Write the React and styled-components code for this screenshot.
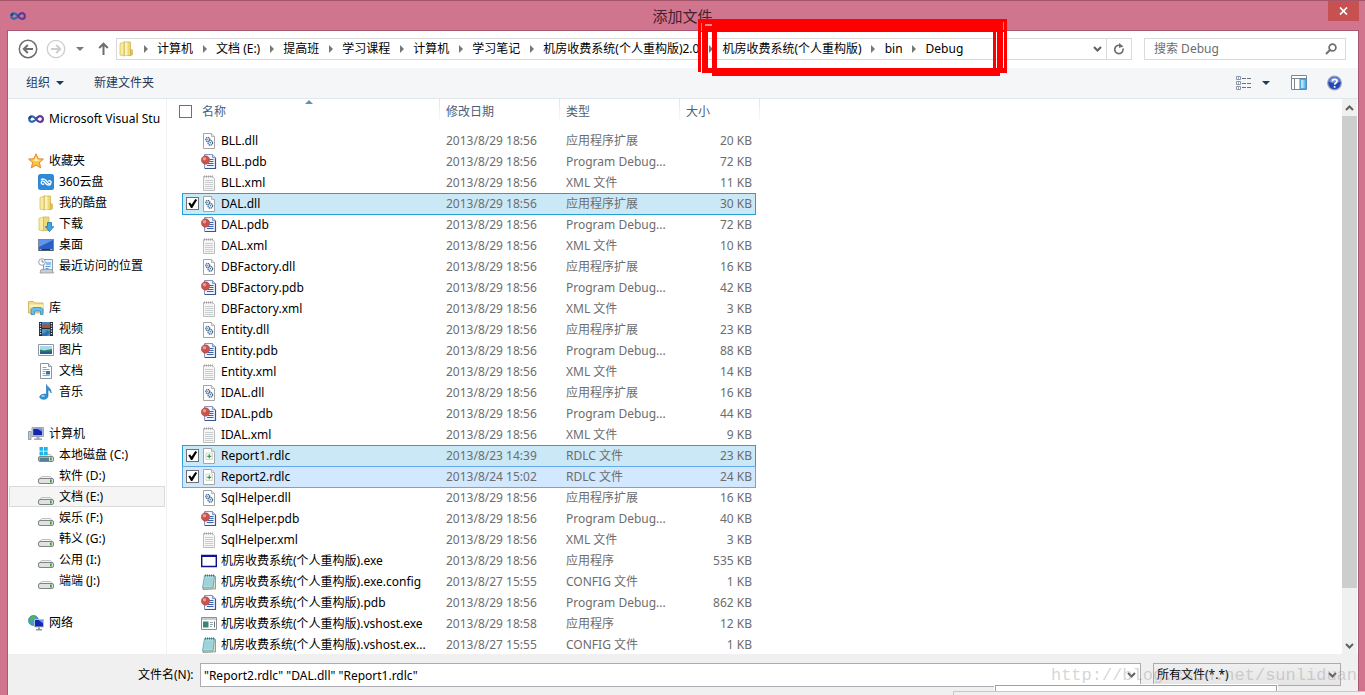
import React, { useState } from 'react'
import styled, { createGlobalStyle, css } from 'styled-components'

const GlobalStyle = createGlobalStyle`
  * {
    box-sizing: border-box;
  }
  body {
    margin: 0;
    overflow: hidden;
  }
  body, button, input, select {
    font-family: 'Noto Sans', 'Noto Sans CJK SC', sans-serif;
    font-size: 12px;
    line-height: 20px;
  }
  button {
    border: 0;
    padding: 0;
    background: none;
    color: inherit;
  }
  svg {
    display: block;
    flex: none;
  }
`

const Window = styled.div`
  position: relative;
  display: flex;
  flex-direction: column;
  height: 100vh;
  overflow: hidden;
  padding: 0 6px 0 7px;
  background: #d1758f;
  border-top: 1px solid #a5566c;
  color: #000;
`

const TitleBar = styled.header`
  display: grid;
  grid-template-columns: 1fr auto 1fr;
  align-items: center;
  height: 29px;
  padding-left: 3px;
`

const Title = styled.h1`
  margin: 0 4px 0 0;
  font-size: 15px;
  font-weight: 400;
  color: #43202c;
`

const CloseButton = styled.button`
  display: flex;
  align-items: center;
  justify-content: center;
  align-self: start;
  justify-self: end;
  width: 31px;
  height: 20px;
  background: #c75050;
`

const Dialog = styled.main`
  flex: 1;
  min-height: 0;
  display: flex;
  flex-direction: column;
  background: #fff;
  border: 1px solid #a95a72;
  border-bottom: 0;
`

const AddressRow = styled.div`
  display: flex;
  align-items: center;
  height: 37px;
  padding: 0 12px 2px 10px;
`

const NavButton = styled.button`
  display: flex;
  align-items: center;
  justify-content: center;
  width: ${p => p.$width}px;
  height: 22px;
  margin-left: ${p => p.$gap || 0}px;
`

const AddressBar = styled.nav`
  flex: 1;
  display: flex;
  align-items: center;
  height: 22px;
  margin-right: 12px;
  padding-left: 1px;
  border: 1px solid #d9d9d9;
  white-space: nowrap;
`

const Crumb = styled.a`
  display: flex;
  align-items: center;
  color: #000;
  text-decoration: none;
`

const CrumbArrow = styled.span`
  display: flex;
  justify-content: center;
  width: 23px;
`

const BarButton = styled.button`
  display: flex;
  align-items: center;
  justify-content: center;
  width: ${p => p.$width}px;
  height: 20px;
  border-left: ${p => (p.$divided ? '1px solid #d9d9d9' : '0')};
`

const Spacer = styled.span`
  flex: 1;
`

const SearchBox = styled.label`
  display: flex;
  align-items: center;
  width: 202px;
  height: 22px;
  padding: 0 8px 0 9px;
  border: 1px solid #d9d9d9;

  input {
    flex: 1;
    min-width: 0;
    height: 20px;
    padding: 0;
    border: 0;
    outline: 0;
    background: none;
  }
  input::placeholder {
    color: #6d6d6d;
  }
`

const Toolbar = styled.div`
  display: flex;
  align-items: center;
  height: 31px;
  padding: 0 16px 0 18px;
  background: #f5f6f8;
  border-bottom: 1px solid #e1e5ec;
  color: #1e395b;
`

const ToolButton = styled.button`
  display: flex;
  align-items: center;
  gap: 6px;
  height: 22px;
  margin-left: ${p => p.$gap || 0}px;
`

const Body = styled.div`
  flex: 1;
  min-height: 0;
  display: flex;
`

const Sidebar = styled.nav`
  flex: none;
  display: flex;
  flex-direction: column;
  gap: 21px;
  width: 159px;
  padding: 9px 1px 0 1px;
  border-right: 1px solid #f0f1f4;
  overflow: hidden;
`

const Group = styled.ul`
  margin: 0;
  padding: 0;
  list-style: none;
`

const Place = styled.a`
  display: flex;
  align-items: center;
  gap: 5px;
  height: 21px;
  padding-left: ${p => (p.$child ? 28 : 18)}px;
  border: 1px solid transparent;
  overflow: hidden;
  white-space: nowrap;
  color: #000;
  text-decoration: none;
  ${p =>
    p.$active &&
    css`
      background: #f5f5f5;
      border-color: #dadada;
    `}
`

const FileArea = styled.div`
  flex: 1;
  min-width: 0;
  overflow: hidden;
`

const FileTable = styled.table`
  width: 593px;
  table-layout: fixed;
  border-collapse: separate;
  border-spacing: 0;
  cursor: default;
`

const HeadCell = styled.th`
  position: relative;
  height: 31px;
  padding: 2px 6px 8px ${p => (p.$first ? 12 : p.$name ? 1 : 6)}px;
  text-align: left;
  font-weight: 400;
  line-height: 21px;
  color: #4c607a;
  background: ${p =>
    p.$first
      ? 'none'
      : 'linear-gradient(#dfe4ec, #fafbfc) right top / 1px 23px no-repeat'};
`

const SortMark = styled.svg`
  position: absolute;
  top: 1px;
  left: calc(50% - 16px);
`

const Cell = styled.td`
  height: 21px;
  padding: 0 3px 0 ${p => p.$pad || 0}px;
  overflow: hidden;
  white-space: nowrap;
  text-overflow: ellipsis;
  text-align: ${p => p.$align || 'left'};
  color: ${p => (p.$dark ? '#000' : '#6d6d6d')};
`

const picked = css`
  background: ${p => (p.$focused ? '#d1e8ff' : '#cbe8f6')};
  box-shadow: inset 0 1px 0 ${p => p.$edge}, 0 1px 0 ${p => p.$edge};
`

const Row = styled.tr`
  ${Cell} + ${Cell}:not(:last-child) {
    ${p => p.$picked && picked}
  }
  ${Cell}:nth-child(2) {
    border-left: 1px solid ${p => (p.$picked ? p.$edge : 'transparent')};
  }
  ${Cell}:nth-child(6) {
    border-right: 1px solid ${p => (p.$picked ? p.$edge : 'transparent')};
  }
`

const FileName = styled.span`
  display: flex;
  align-items: center;
  gap: 4px;
`

const CheckBox = styled.input`
  appearance: none;
  display: block;
  width: 13px;
  height: 13px;
  margin: 0;
  background: #fff;
  border: 1px solid #707070;
  opacity: ${p => (p.$quiet && !p.checked ? 0 : 1)};

  &:checked::before {
    content: '';
    display: block;
    width: 11px;
    height: 11px;
    background: #000;
    clip-path: polygon(12% 48%, 28% 40%, 42% 60%, 76% 10%, 92% 18%, 48% 90%, 36% 90%);
  }
`

const ScrollBar = styled.div`
  flex: none;
  display: flex;
  flex-direction: column;
  width: 15px;
  margin-right: 1px;
  background: #f0f0f0;
`

const ScrollButton = styled.button`
  display: flex;
  align-items: center;
  justify-content: center;
  height: 17px;
`

const ScrollTrack = styled.div`
  flex: 1;
`

const ScrollThumb = styled.div`
  height: 90.6%;
  background: #cdcdcd;
`

const Footer = styled.footer`
  flex: none;
  display: flex;
  align-items: flex-start;
  height: 41px;
  padding: 9px 17px 0 130px;
  background: #f0f0f0;
`

const FieldLabel = styled.label`
  width: 62px;
  line-height: 23px;
  white-space: nowrap;
`

const Field = styled.div`
  display: flex;
  align-items: center;
  height: 24px;
  border: 1px solid #abadb3;
  background: #fff;
  flex: 1;

  input {
    flex: 1;
    min-width: 0;
    height: 22px;
    padding: 0 3px;
    border: 0;
    outline: 0;
    background: none;
  }
`

const TypeField = styled.div`
  display: grid;
  align-items: center;
  width: 188px;
  height: 23px;
  margin-left: 12px;
  border: 1px solid #acacac;
  background: linear-gradient(#f0f0f0, #e5e5e5);

  select, svg {
    grid-area: 1 / 1;
  }
  select {
    appearance: none;
    height: 21px;
    padding: 0 20px 0 3px;
    border: 0;
    outline: 0;
    background: none;
    color: #000;
  }
  svg {
    justify-self: end;
    margin-right: 3px;
    pointer-events: none;
  }
`

const Watermark = styled.div`
  position: absolute;
  right: 8px;
  bottom: 9px;
  font-family: 'Liberation Mono', monospace;
  font-size: 17px;
  line-height: 20px;
  color: rgba(150, 150, 150, 0.4);
  pointer-events: none;
`

const Marker = styled.svg`
  position: absolute;
  top: 18px;
  left: 698px;
  pointer-events: none;
`

/* edges of the windows lying below this one */
const BackWindow = styled.div`
  position: absolute;
  right: 88px;
  bottom: 0;
  width: 282px;
  height: 10px;
  background: #fff;
  border: 1px solid #a0a0a0;
  outline: 1px solid #fff;
`

const BackEdge = styled.div`
  position: absolute;
  right: 0;
  bottom: 0;
  width: 412px;
  height: 4px;
  background: #f0f0f0;
  border: 1px solid #c8c8c8;
  border-width: 1px 0 0 1px;
`

const Svg = ({ w = 16, h = 16, children }) => (
  <svg width={w} height={h} viewBox={`0 0 ${w} ${h}`} aria-hidden="true">
    {children}
  </svg>
)

const StudioLogo = () => (
  <Svg>
    <g fill="none" strokeWidth="2.2">
      <path d="M8 8.2C6.6 6.4 5.6 5.4 4 5.4a2.7 2.7 0 0 0 0 5.4c1.8 0 2.8-1.2 4-2.6" stroke="#2b6cb0" />
      <path d="M7.4 9C8.8 7 10 5.2 12 5.2a2.9 2.9 0 0 1 0 5.8c-1.7 0-3-1.4-4-2.8" stroke="#5b3a9c" />
      <path d="M1.4 8a2.7 2.7 0 0 1 2-2.5" stroke="#24407c" />
    </g>
  </Svg>
)

const Folder = () => (
  <Svg>
    <path d="M2 2.5 7 1v14l-5-1z" fill="#f7eba6" stroke="#d9bf5f" strokeWidth=".8" />
    <path d="M6 1h6.5v13.5H6z" fill="#efd878" stroke="#d3b556" strokeWidth=".8" />
    <path d="M7 1.5h2.5v13H7z" fill="#fbf3bf" />
    <path d="m12.5 8 2 1.2v4.6l-2 1z" fill="#e3c55e" stroke="#c9a948" strokeWidth=".6" />
  </Svg>
)

const Download = () => (
  <Svg>
    <path d="M1 2.5 6 1v14l-5-1z" fill="#f7eba6" stroke="#d9bf5f" strokeWidth=".8" />
    <path d="M5.5 1H11v13.5H5.5z" fill="#efd878" stroke="#d3b556" strokeWidth=".8" />
    <path d="M9.5 6.5h4v4.2h2.2l-4.2 4.8-4.2-4.8h2.2z" fill="#3fa9e8" stroke="#1a6fb0" strokeWidth=".8" />
  </Svg>
)

const Star = () => (
  <Svg>
    <path
      d="m8 .8 2.1 4.9 5.3.4-4 3.5 1.3 5.3L8 12.1l-4.7 2.8 1.3-5.3-4-3.5 5.3-.4z"
      fill="#fdc240"
      stroke="#e57a1e"
      strokeWidth=".9"
    />
    <path d="m8 3.2 1.3 3.4 3.6.3-5 1.5-3.5-1.5 2.4-.3z" fill="#fff0a8" />
  </Svg>
)

const Cloud = () => (
  <Svg>
    <rect width="16" height="16" rx="2.5" fill="#2d8ad8" />
    <path
      d="M3 6.2C4.500 4.400 6.500 4.800 8 6.500l2.200 2.700c1 1.200 2.900.8 2.900-.9 0-1.500-1.700-2-2.900-1M12.800 10.200c-1.600 1.500-3.500 1-4.800-.5L6.300 7.800C5.200 6.700 3.200 7 3.200 8.700c0 1.600 1.800 2 3 1"
      fill="none"
      stroke="#fff"
      strokeWidth="1.300"
    />
  </Svg>
)

const Desktop = () => (
  <Svg>
    <rect x=".5" y="2.5" width="15" height="11" fill="#2c5fc4" stroke="#7b8795" />
    <path d="M1 3h14L1 10z" fill="#5f95ea" />
    <path d="M1 12h14v1.5H1z" fill="#26324a" />
    <path d="M1.5 12.5h2M12 12.5h2.5" stroke="#b9d6f4" strokeWidth=".8" />
  </Svg>
)

const Recent = () => (
  <Svg>
    <path d="M5.5 1.5h9v11h-9z" fill="#eaf2fa" stroke="#8d99a6" />
    <path d="M8 4h5v3H8z" fill="#8fc1ea" />
    <path d="M7.500 8.500h5M7.500 10.500h3" stroke="#5d9ad4" />
    <path d="M3 11.500h11l1.500 3.500H2z" fill="#c9ced4" stroke="#868d95" strokeWidth=".7" />
    <circle cx="4" cy="4" r="3.3" fill="#fff" stroke="#8a98a6" strokeWidth=".9" />
    <path d="M4 2v2h2" fill="none" stroke="#5d6c7b" strokeWidth=".8" />
  </Svg>
)

const Library = () => (
  <Svg>
    <path d="M.5 1.5h5L7 3h8v10H.5z" fill="#f0dc86" stroke="#c9ab50" strokeWidth=".8" />
    <path d="M1.500 4.500H15v3H1.500z" fill="#fbf2b8" />
    <path d="M3 14.500V9.500L5 7.500h8l2 2v5h-2.500v-3.500h-6v3.500z" fill="#6dbbe8" stroke="#3d87bb" strokeWidth=".8" />
  </Svg>
)

const Film = () => (
  <Svg>
    <path d="M1 1h14v14H1z" fill="#222b35" />
    <path d="M4 1h8v6H4z" fill="#3f84c4" />
    <path d="M4 8h8v7H4z" fill="#4b97d2" />
    <path d="m4 5 3-3 2 2 3-2v5H4z" fill="#a4543a" />
    <path d="m4 13 3-1 2-3 3 2-3 4H4z" fill="#2d6da8" />
    <path d="M2.5 2v12M13.5 2v12" stroke="#dfe7ee" strokeWidth="1.3" strokeDasharray="1.3 1.2" />
  </Svg>
)

const Picture = () => (
  <Svg>
    <path d="M.5 2.5h15v11H.5z" fill="#fff" stroke="#8e979f" />
    <path d="M2 4h12v8H2z" fill="#a9d8f2" />
    <path d="m2 7.5 4 1 8-1.5v3H2z" fill="#2f8463" />
    <path d="M2 9.5h12V12H2z" fill="#265c8e" />
  </Svg>
)

const Document = () => (
  <Svg>
    <path d="M2.5.5h8l3 3v12h-11z" fill="#fff" stroke="#8e979f" />
    <path d="M10.5.5v3h3" fill="#dfe5ea" stroke="#8e979f" />
    <path d="M4.5 4.5h4M4.5 6.5h7M4.5 8.5h3M4.5 10.5h3M4.5 12.5h7" stroke="#93a5b8" />
    <path d="M8 8h4v3.5H8z" fill="#2f75b8" />
  </Svg>
)

const Music = () => (
  <Svg>
    <path
      d="M8.500.5c.6 2.500 5 3.500 4.600 8.500-.6-1.800-1.800-2.800-3.100-3.200V12c0 2-1.900 3.300-4.200 3.300-2.700 0-4.300-1.200-4-2.700.3-1.700 3.700-3 6.700-2.300z"
      fill="#2f93dc"
      stroke="#1b6bad"
      strokeWidth=".6"
    />
    <ellipse cx="5" cy="12" rx="1.800" ry="1" fill="#8fd0f7" />
  </Svg>
)

const Computer = () => (
  <Svg>
    <path d="M.5 5.5H3v8H.5z" fill="#c6ccd2" stroke="#838b93" strokeWidth=".8" />
    <path d="M4 1.5h11.5v9H4z" fill="#d9dee3" stroke="#8b939b" strokeWidth=".8" />
    <path d="M5.2 2.7h9v6.6h-9z" fill="#1325b4" />
    <path d="M9 2.7h5.2v3z" fill="#6f8cf2" />
    <path d="M8.5 11h3v1.5H14V14H6v-1.5h2.5z" fill="#a2a9b0" />
  </Svg>
)

const DriveBody = () => (
  <g>
    <path d="M3.500 7.500h9l3 3.500H.5z" fill="#f1f2f3" stroke="#a6abaf" strokeWidth=".7" />
    <rect x=".5" y="9.500" width="15" height="5" rx="1.500" fill="#dfe1e3" stroke="#73787c" strokeWidth=".9" />
    <path d="M12 10.500h1.700v3H12z" fill="#3f9a35" />
  </g>
)

const Drive = () => (
  <Svg>
    <g transform="translate(0 1)">
      <DriveBody />
    </g>
  </Svg>
)

const SystemDrive = () => (
  <Svg>
    <DriveBody />
    <path d="M1.500 10.500h9.500V14H1.500z" fill="#4e8399" />
    <path d="M1.5 0h3.7v3.7H1.5zM6 0h3.7v3.7H6zM1.5 4.500h3.7v3.700H1.500zM6 4.500h3.700v3.700H6z" fill="#1cb4e8" />
  </Svg>
)

const Network = () => (
  <Svg>
    <circle cx="5.5" cy="5.5" r="5" fill="#3aa0d8" stroke="#2a74a8" strokeWidth=".7" />
    <path d="M2 3c2-2 4-2.500 5-1.500S6 4 4.500 5 3 8 1.500 7zM4 8.500l3-1v2.800z" fill="#54b848" />
    <path d="M6.5 4.5h9V12h-9z" fill="#1226b0" stroke="#b9c2ca" />
    <path d="M10.5 5H15v3.500z" fill="#6f8cf2" />
    <path d="M10 12.500h2V14h2v1.500H8V14h2z" fill="#8f989f" />
  </Svg>
)

const Page = () => (
  <g>
    <path d="M2.5.5h8l3 3v12h-11z" fill="#fff" stroke="#a5a5a5" />
    <path d="M10.5.5v3h3" fill="#e8e8e8" stroke="#b5b5b5" />
  </g>
)

const DllIcon = () => (
  <Svg>
    <Page />
    <g fill="#fff" stroke="#3c6796" strokeWidth="1.3" strokeDasharray="1.2 .5">
      <circle cx="6.8" cy="6.5" r="2" />
      <circle cx="9.3" cy="9.800" r="2.300" />
    </g>
    <circle cx="9.3" cy="9.800" r=".8" fill="#3c6796" />
    <circle cx="6.8" cy="6.5" r=".6" fill="#3c6796" />
  </Svg>
)

const PdbIcon = () => (
  <Svg>
    <path d="M3.5.5h8l3 3v11h-11z" fill="#eef3fc" stroke="#8496bd" />
    <path d="M14.5 4v10.500H4" fill="none" stroke="#3a5490" strokeWidth="1.2" />
    <path d="M11.5.5v3h3" fill="#c6d3ec" stroke="#8496bd" />
    <path d="M8.500 5.500h4M8.500 7.500h4M7 9.500h5.500M6 11.500h6.500" stroke="#3d62a8" />
    <circle cx="4.500" cy="6" r="4.200" fill="#c8534c" stroke="#a0403b" strokeWidth=".5" />
    <circle cx="3.500" cy="4.700" r="1.800" fill="#ea9a90" />
  </Svg>
)

const XmlIcon = () => (
  <Svg>
    <path d="M2.500 1.500h9l2 2v12h-11z" fill="#f6f6f6" stroke="#bdbdbd" />
    <path d="M3 1.500h9" stroke="#a0a0a0" strokeWidth="2" strokeDasharray="1 1" />
    <path d="M4 5.500h8M4 7.500h8M4 9.500h8M4 11.500h8M4 13.500h8" stroke="#c9ced1" />
  </Svg>
)

const RdlcIcon = () => (
  <Svg>
    <Page />
    <path d="M5 5h6.5v6.5H5z" fill="#f4f7f4" stroke="#c8d0c8" strokeWidth=".8" />
    <path d="M8.300 6.300v4M6.300 8.300h4" stroke="#3f9a4a" strokeWidth="1.2" />
  </Svg>
)

const ExeIcon = () => (
  <Svg>
    <path d="M.7 2.500h14.600v11H.7z" fill="#fff" stroke="#101080" strokeWidth="1.400" />
    <path d="M0 2h16v2H0z" fill="#101090" />
  </Svg>
)

const ConfigIcon = () => (
  <Svg>
    <path d="M4.5 2.500h10V15h-2L2 15.500z" fill="#e3dfc0" stroke="#7d8c80" strokeWidth=".8" />
    <path d="M3.500 1.500h10L12 14H1.500z" fill="#a9dbe2" stroke="#5c9aa5" strokeWidth=".8" />
    <path d="M4 1.500h10" stroke="#4c6c74" strokeWidth="1.800" strokeDasharray="1 1" />
    <path d="M4 5h8.500M3.800 7h8.500M3.500 9H12M3.200 11h8.500" stroke="#8cc6cf" strokeWidth=".7" />
  </Svg>
)

const HostIcon = () => (
  <Svg>
    <path d="M.5 1.5h15v12H.5z" fill="#fff" stroke="#8b8f93" />
    <path d="M1 2h14v2H1z" fill="#c9cdd1" />
    <path d="M2 5.500h5.500v6H2z" fill="#36876f" />
    <path d="M9 6.500h3M9 8.500h3M9 10.500h2" stroke="#9aa4ac" />
    <path d="M13.500 5.500v6" stroke="#6a7279" />
  </Svg>
)

const Back = ({ color }) => (
  <Svg w={20} h={20}>
    <circle cx="10" cy="10" r="8.7" fill="none" stroke={color} strokeWidth="1.5" />
    <path d="M15 10H6.500M9.800 6 5.800 10l4 4" fill="none" stroke={color} strokeWidth="2" />
  </Svg>
)

const Forward = ({ color }) => (
  <Svg w={20} h={20}>
    <circle cx="10" cy="10" r="8.7" fill="none" stroke={color} strokeWidth="1.3" />
    <path d="M5 10h8.500M10.200 6l4 4-4 4" fill="none" stroke={color} strokeWidth="2" />
  </Svg>
)

const Triangle = ({ color }) => (
  <Svg w={8} h={4}>
    <path d="M0 0h8L4 4z" fill={color} />
  </Svg>
)

const Chevron = ({ up }) => (
  <Svg w={9} h={6}>
    <path d={up ? 'm1 5 3.500-3.500L8 5' : 'm1 1 3.500 3.500L8 1'} fill="none" stroke="#606060" strokeWidth="2" />
  </Svg>
)

const places = [
  [{ icon: StudioLogo, name: 'Microsoft Visual Stu' }],
  [
    { icon: Star, name: '收藏夹' },
    { icon: Cloud, name: '360云盘' },
    { icon: Folder, name: '我的酷盘' },
    { icon: Download, name: '下载' },
    { icon: Desktop, name: '桌面' },
    { icon: Recent, name: '最近访问的位置' }
  ],
  [
    { icon: Library, name: '库' },
    { icon: Film, name: '视频' },
    { icon: Picture, name: '图片' },
    { icon: Document, name: '文档' },
    { icon: Music, name: '音乐' }
  ],
  [
    { icon: Computer, name: '计算机' },
    { icon: SystemDrive, name: '本地磁盘 (C:)' },
    { icon: Drive, name: '软件 (D:)' },
    { icon: Drive, name: '文档 (E:)', active: true },
    { icon: Drive, name: '娱乐 (F:)' },
    { icon: Drive, name: '韩义 (G:)' },
    { icon: Drive, name: '公用 (I:)' },
    { icon: Drive, name: '端端 (J:)' }
  ],
  [{ icon: Network, name: '网络' }]
]

const crumbs = [
  '计算机',
  '文档 (E:)',
  '提高班',
  '学习课程',
  '计算机',
  '学习笔记',
  '机房收费系统(个人重构版)2.0',
  '机房收费系统(个人重构版)',
  'bin',
  'Debug'
]

const kinds = {
  dll: [DllIcon, '应用程序扩展'],
  pdb: [PdbIcon, 'Program Debug...'],
  xml: [XmlIcon, 'XML 文件'],
  rdlc: [RdlcIcon, 'RDLC 文件'],
  exe: [ExeIcon, '应用程序'],
  host: [HostIcon, '应用程序'],
  config: [ConfigIcon, 'CONFIG 文件']
}

const built = '2013/8/29 18:56'

const files = [
  ['BLL.dll', 'dll', built, 20],
  ['BLL.pdb', 'pdb', built, 72],
  ['BLL.xml', 'xml', built, 11],
  ['DAL.dll', 'dll', built, 30],
  ['DAL.pdb', 'pdb', built, 72],
  ['DAL.xml', 'xml', built, 10],
  ['DBFactory.dll', 'dll', built, 16],
  ['DBFactory.pdb', 'pdb', built, 42],
  ['DBFactory.xml', 'xml', built, 3],
  ['Entity.dll', 'dll', built, 23],
  ['Entity.pdb', 'pdb', built, 88],
  ['Entity.xml', 'xml', built, 14],
  ['IDAL.dll', 'dll', built, 16],
  ['IDAL.pdb', 'pdb', built, 44],
  ['IDAL.xml', 'xml', built, 9],
  ['Report1.rdlc', 'rdlc', '2013/8/23 14:39', 23],
  ['Report2.rdlc', 'rdlc', '2013/8/24 15:02', 24],
  ['SqlHelper.dll', 'dll', built, 16],
  ['SqlHelper.pdb', 'pdb', built, 40],
  ['SqlHelper.xml', 'xml', built, 3],
  ['机房收费系统(个人重构版).exe', 'exe', built, 535],
  ['机房收费系统(个人重构版).exe.config', 'config', '2013/8/27 15:55', 1],
  ['机房收费系统(个人重构版).pdb', 'pdb', built, 862],
  ['机房收费系统(个人重构版).vshost.exe', 'host', '2013/8/29 18:58', 12],
  ['机房收费系统(个人重构版).vshost.ex...', 'config', '2013/8/27 15:55', 1]
]

const FileRow = ({ file, picked, focused, onToggle }) => {
  const [name, kind, date, size] = file
  const [Icon, type] = kinds[kind]
  return (
    <Row $picked={picked} $focused={focused} $edge={focused ? '#66a7e8' : '#26a0da'}>
      <Cell />
      <Cell $pad={3}>
        <CheckBox type="checkbox" aria-label={name} $quiet checked={picked} onChange={onToggle} />
      </Cell>
      <Cell $dark>
        <FileName>
          <Icon />
          {name}
        </FileName>
      </Cell>
      <Cell $pad={6}>{date}</Cell>
      <Cell $pad={6}>{type}</Cell>
      <Cell $align="right">{size} KB</Cell>
      <Cell />
    </Row>
  )
}

const App = () => {
  const [picked, setPicked] = useState(['Report2.rdlc', 'DAL.dll', 'Report1.rdlc'])

  const toggle = name =>
    setPicked(picked.includes(name) ? picked.filter(n => n !== name) : [name, ...picked])

  return (
    <Window>
      <GlobalStyle />
      <TitleBar>
        <StudioLogo />
        <Title>添加文件</Title>
        <CloseButton aria-label="关闭">
          <Svg w={9} h={8}>
            <path d="m1 .5 7 7M8 .5l-7 7" stroke="#fff" strokeWidth="1.7" />
          </Svg>
        </CloseButton>
      </TitleBar>

      <Dialog>
        <AddressRow>
          <NavButton $width={20} aria-label="后退">
            <Back color="#6e6e6e" />
          </NavButton>
          <NavButton $width={20} $gap={8} aria-label="前进">
            <Forward color="#cdcdcd" />
          </NavButton>
          <NavButton $width={10} $gap={9} aria-label="最近浏览的位置">
            <Triangle color="#7a7a7a" />
          </NavButton>
          <NavButton $width={25} $gap={6} aria-label="向上">
            <Svg w={11} h={13}>
              <path d="M5.500 13V2M1.200 6l4.300-4.300L9.800 6" fill="none" stroke="#6e6e6e" strokeWidth="2" />
            </Svg>
          </NavButton>
          <AddressBar>
            <Folder />
            {crumbs.map((name, i) => (
              <Crumb href="#" key={i}>
                <CrumbArrow>
                  <Svg w={4} h={8}>
                    <path d="m0 0 4 4-4 4z" fill="#777" />
                  </Svg>
                </CrumbArrow>
                {name}
              </Crumb>
            ))}
            <Spacer />
            <BarButton $width={18} aria-label="以前的位置">
              <Chevron />
            </BarButton>
            <BarButton $width={25} $divided aria-label="刷新">
              <Svg w={12} h={12}>
                <path d="M10 5.500A4.200 4.200 0 1 1 7.500 2.600" fill="none" stroke="#6e6e6e" strokeWidth="1.7" />
                <path d="M6 0v5l4.500-1.500z" fill="#6e6e6e" />
              </Svg>
            </BarButton>
          </AddressBar>
          <SearchBox>
            <input type="search" aria-label="搜索" placeholder="搜索 Debug" />
            <Svg w={12} h={12}>
              <circle cx="7.500" cy="4.500" r="3.400" fill="none" stroke="#6e6e6e" strokeWidth="1.7" />
              <path d="M5 7 1 11" stroke="#6e6e6e" strokeWidth="2" />
            </Svg>
          </SearchBox>
        </AddressRow>

        <Toolbar>
          <ToolButton>
            组织
            <Triangle color="#1e395b" />
          </ToolButton>
          <ToolButton $gap={30}>新建文件夹</ToolButton>
          <Spacer />
          <ToolButton aria-label="更改视图">
            <Svg>
              <path d="M.5 1.500h4v3h-4zM.5 6.500h4v3h-4zM.5 11.500h4v3h-4z" fill="#fff" stroke="#8b95a1" />
              <path d="M2 3h1M2 8h1M2 13h1" stroke="#33629a" />
              <path d="M6 3.500h4M11 3.500h4M6 8.500h4M11 8.500h4M6 12.500h4M11 12.500h4" stroke="#66717e" />
            </Svg>
          </ToolButton>
          <ToolButton $gap={10} aria-label="更多选项">
            <Triangle color="#1e395b" />
          </ToolButton>
          <ToolButton $gap={21} aria-label="预览窗格">
            <Svg>
              <path d="M.5.5h15v14H.5z" fill="#fff" stroke="#7d8791" />
              <path d="M0 3.500h16M3.500 4v10" stroke="#7d8791" />
              <path d="M9 4h6v10H9z" fill="#6fc1f5" stroke="#3b8fd0" />
              <path d="M10 5h2.500v8H10z" fill="#b4e0fb" />
            </Svg>
          </ToolButton>
          <ToolButton $gap={20} aria-label="帮助">
            <Svg w={15} h={16}>
              <circle cx="7.500" cy="8" r="6.800" fill="#2346b4" stroke="#9aa3b5" strokeWidth="1.2" />
              <path d="M2 6.500a5.700 5.700 0 0 1 11 0C10 8.500 5 8.500 2 6.500z" fill="#6d8ce0" />
              <path d="M5.300 6.500c0-3 4.700-2.800 4.700-.2 0 1.800-2.400 1.600-2.400 3.500M7.600 11v1.700" fill="none" stroke="#fff" strokeWidth="1.7" />
            </Svg>
          </ToolButton>
        </Toolbar>

        <Body>
          <Sidebar>
            {places.map((group, g) => (
              <Group key={g}>
                {group.map(({ icon: Icon, name, active }, i) => (
                  <li key={name}>
                    <Place href="#" $child={i > 0} $active={active}>
                      <Icon />
                      {name}
                    </Place>
                  </li>
                ))}
              </Group>
            ))}
          </Sidebar>

          <FileArea>
            <FileTable>
              <colgroup>
                <col width="15" />
                <col width="19" />
                <col width="239" />
                <col width="120" />
                <col width="120" />
                <col width="76" />
                <col width="4" />
              </colgroup>
              <thead>
                <tr>
                  <HeadCell colSpan={2} $first>
                    <CheckBox
                      type="checkbox"
                      aria-label="全选"
                      checked={picked.length === files.length}
                      onChange={e => setPicked(e.target.checked ? files.map(f => f[0]) : [])}
                    />
                  </HeadCell>
                  <HeadCell $name>
                    名称
                    <SortMark width="8" height="4" viewBox="0 0 8 4">
                      <path d="m0 4 4-4 4 4z" fill="#5f93b4" />
                    </SortMark>
                  </HeadCell>
                  <HeadCell>修改日期</HeadCell>
                  <HeadCell>类型</HeadCell>
                  <HeadCell colSpan={2}>大小</HeadCell>
                </tr>
              </thead>
              <tbody>
                {files.map(file => (
                  <FileRow
                    key={file[0]}
                    file={file}
                    picked={picked.includes(file[0])}
                    focused={file[0] === 'Report2.rdlc'}
                    onToggle={() => toggle(file[0])}
                  />
                ))}
              </tbody>
            </FileTable>
          </FileArea>

          <ScrollBar>
            <ScrollButton aria-label="向上滚动">
              <Chevron up />
            </ScrollButton>
            <ScrollTrack>
              <ScrollThumb />
            </ScrollTrack>
            <ScrollButton aria-label="向下滚动">
              <Chevron />
            </ScrollButton>
          </ScrollBar>
        </Body>

        <Footer>
          <FieldLabel htmlFor="file-name">文件名(N):</FieldLabel>
          <Field>
            <input id="file-name" readOnly value={picked.map(n => `"${n}"`).join(' ')} />
            <BarButton $width={17} aria-label="文件名历史">
              <Chevron />
            </BarButton>
          </Field>
          <TypeField>
            <select aria-label="文件类型">
              <option>所有文件(*.*)</option>
            </select>
            <Chevron />
          </TypeField>
        </Footer>
      </Dialog>

      <BackWindow />
      <BackEdge />
      <Watermark>http://blog.csdn.net/sunliduan</Watermark>
      <Marker width="309" height="57" viewBox="0 0 309 57" fill="#fe0000">
        <path d="M0 0h309v13H0z" />
        <path d="M0 13h3v40H0zM4 13h6v41H4zM14 13h5v36h-5z" />
        <path d="M295 13h3v36h-3zM299 13h6v41h-6zM306 13h3v41h-3z" />
        <path d="M4 49h10v5H4zM14 49h288v8H14zM298 49h11v5h-11z" />
        <path d="M7 5h7v2H7zM305 3h1v8h-1zM3 4h1v8H3z" fill="#e0859b" />
      </Marker>
    </Window>
  )
}

export default App
